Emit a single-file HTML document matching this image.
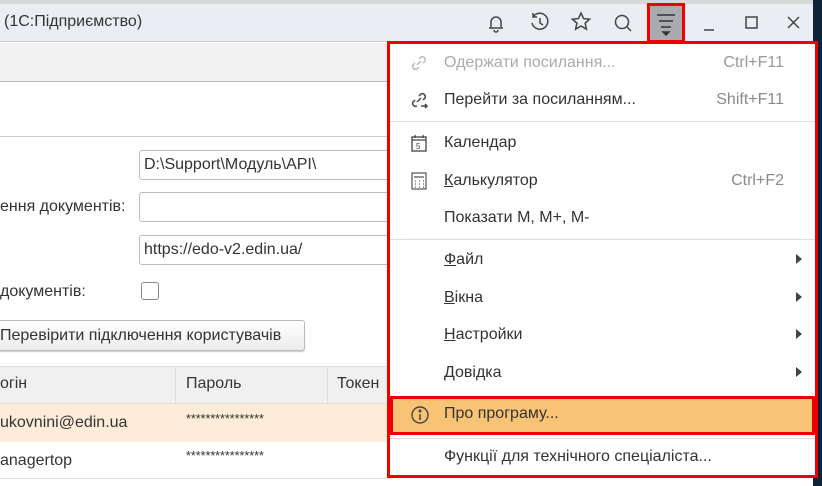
<!DOCTYPE html>
<html><head><meta charset="utf-8"><style>
*{box-sizing:border-box;margin:0;padding:0}
body{width:822px;height:486px;overflow:hidden;background:#fff;font-family:"Liberation Sans",sans-serif;font-size:16px;color:#333;position:relative}
.a{position:absolute}
.inp{position:absolute;border:1px solid #bcbcbc;border-radius:3px;background:#fff;height:30px;padding:5px 4px;font-size:16px}
.mi{position:absolute;left:444px;font-size:16px;color:#333}
.sc{position:absolute;right:38px;color:#8a8a8a;font-size:16px}
.arr{position:absolute;left:796px;width:0;height:0;border-top:5px solid transparent;border-bottom:5px solid transparent;border-left:6px solid #444}
.sep{position:absolute;left:390px;width:425px;height:1px;background:#ddd}
u{text-decoration:underline}
</style></head><body>
<div class="a" style="left:0;top:0;width:822px;height:4px;background:#d8d8d8"></div>
<div class="a" style="left:0;top:4px;width:813px;height:38px;background:#eaeef2;border-bottom:1px solid #ccc"></div>
<div class="a" style="left:813px;top:0;width:9px;height:486px;background:#0e2238"></div>
<div class="a" style="left:4px;top:13px;font-size:16px;color:#333">(1С:Підприємство)</div>
<svg class="a" style="left:480px;top:8px" width="330" height="32" viewBox="480 8 330 32" fill="none" stroke="#444" stroke-width="1.5">
<path d="M489 28h14M491 28v-6a5 5 0 0 1 10 0v6M494 30a2 2 0 0 0 4 0"/>
<path d="M533 17a8 8 0 1 1-1 6M533 13v4h4M540 18v5l3 2"/>
<path d="M581 13l2.6 5.6 6 .6-4.5 4 1.3 6-5.4-3.2-5.4 3.2 1.3-6-4.5-4 6-.6z"/>
<circle cx="622" cy="22" r="6.5"/><path d="M627 27l4 4"/>
<path d="M704 30h10" /><rect x="746" y="17" width="11" height="11"/><path d="M788 17l11 11M799 17l-11 11"/>
</svg>
<div class="a" style="left:647px;top:3px;width:38px;height:40px;background:#a8acb0;border:3px solid #e00"></div>
<svg class="a" style="left:650px;top:6px" width="32" height="34" stroke="#333" stroke-width="1.4"><path d="M7 9h18M9 15h14M11 21h10"/><path d="M13 26l3 3 3-3z" fill="#333"/></svg>
<div class="a" style="left:0;top:43px;width:390px;height:39px;background:#f2f2f2;border-bottom:1px solid #bbb"></div>
<div class="a" style="left:0;top:136px;width:390px;height:1px;background:#ccc"></div>
<div class="inp" style="left:139px;top:150px;width:260px">D:\Support\Модуль\API\</div>
<div class="a" style="left:0;top:198px">ення документів:</div>
<div class="inp" style="left:139px;top:192px;width:260px"></div>
<div class="inp" style="left:139px;top:235px;width:260px">https://edo-v2.edin.ua/</div>
<div class="a" style="left:0;top:283px">документів:</div>
<div class="a" style="left:141px;top:282px;width:18px;height:18px;border:1px solid #888;border-radius:3px"></div>
<div class="a" style="left:-6px;top:320px;width:311px;height:31px;border:1px solid #bbb;border-radius:3px;background:linear-gradient(#fff,#ececec);padding:6px 0 0 5px;box-shadow:0 1px 1px #ccc;white-space:nowrap">Перевірити підключення користувачів</div>
<div class="a" style="left:0;top:366px;width:390px;height:38px;background:#f0f0f0;border-top:1px solid #ddd;border-bottom:1px solid #ddd"></div>
<div class="a" style="left:175px;top:366px;width:1px;height:76px;background:#ddd"></div>
<div class="a" style="left:327px;top:366px;width:1px;height:76px;background:#ddd"></div>
<div class="a" style="left:0;top:375px">огін</div>
<div class="a" style="left:186px;top:375px">Пароль</div>
<div class="a" style="left:337px;top:375px">Токен</div>
<div class="a" style="left:0;top:404px;width:390px;height:38px;background:#fdecd8"></div>
<div class="a" style="left:0;top:414px">ukovnini@edin.ua</div>
<div class="a" style="left:186px;top:412px;font-size:12.5px">****************</div>
<div class="a" style="left:0;top:452px">anagertop</div>
<div class="a" style="left:186px;top:449px;font-size:12.5px">****************</div>
<div class="a" style="left:0;top:478px;width:390px;height:1px;background:#ddd"></div>
<div class="a" style="left:387px;top:41px;width:431px;height:437px;background:#fff;border:3px solid #e00"></div>
<svg class="a" style="left:408px;top:52px" width="22" height="22" fill="none" stroke="#bbb" stroke-width="1.5"><path d="M9 13l4-4M7 11l-2 2a3 3 0 0 0 4 4l2-2M15 11l2-2a3 3 0 0 0-4-4l-2 2"/></svg>
<div class="mi" style="top:54px;color:#aaa">Одержати посилання...</div><div class="sc" style="top:54px;color:#999">Ctrl+F11</div>
<svg class="a" style="left:408px;top:89px" width="22" height="22" fill="none" stroke="#444" stroke-width="1.5"><path d="M9 13l4-4M7 11l-2 2a3 3 0 0 0 4 4M15 11l2-2a3 3 0 0 0-4-4l-2 2M13 17h6M17 15l2 2-2 2"/></svg>
<div class="mi" style="top:91px">Перейти за посиланням...</div><div class="sc" style="top:91px">Shift+F11</div>
<div class="sep" style="top:121px"></div>
<svg class="a" style="left:410px;top:133px" width="18" height="20" fill="none" stroke="#444" stroke-width="1.3"><rect x="2" y="4" width="14" height="14"/><path d="M2 7h14M5 2v3M13 2v3"/><text x="6" y="16" font-size="8" fill="#444" stroke="none" font-family="Liberation Sans">5</text></svg>
<div class="mi" style="top:134px">Календар</div>
<svg class="a" style="left:410px;top:171px" width="18" height="20" fill="none" stroke="#555" stroke-width="1.2"><rect x="2" y="2" width="14" height="16"/><path d="M4 6h10M5 10h1M9 10h1M13 10h1M5 13h1M9 13h1M13 13h1M5 16h1M9 16h1M13 16h1"/></svg>
<div class="mi" style="top:172px"><u>К</u>алькулятор</div><div class="sc" style="top:172px">Ctrl+F2</div>
<div class="mi" style="top:209px">Показати M, M+, M-</div>
<div class="sep" style="top:239px"></div>
<div class="mi" style="top:251px"><u>Ф</u>айл</div><div class="arr" style="top:254px"></div>
<div class="mi" style="top:289px"><u>В</u>ікна</div><div class="arr" style="top:292px"></div>
<div class="mi" style="top:326px"><u>Н</u>астройки</div><div class="arr" style="top:329px"></div>
<div class="mi" style="top:364px"><u>Д</u>овідка</div><div class="arr" style="top:367px"></div>
<div class="a" style="left:390px;top:396px;width:425px;height:39px;background:#f8c374;border:3px solid #e00"></div>
<svg class="a" style="left:409px;top:404px" width="22" height="22" fill="none" stroke="#444" stroke-width="1.4"><circle cx="11" cy="11" r="8"/><path d="M11 10v5M10 15h2"/><circle cx="11" cy="7" r=".8" fill="#444"/></svg>
<div class="mi" style="top:405px">Про програму...</div>
<div class="sep" style="top:438px"></div>
<div class="mi" style="top:448px">Функції для технічного спеціаліста...</div>
</body></html>
